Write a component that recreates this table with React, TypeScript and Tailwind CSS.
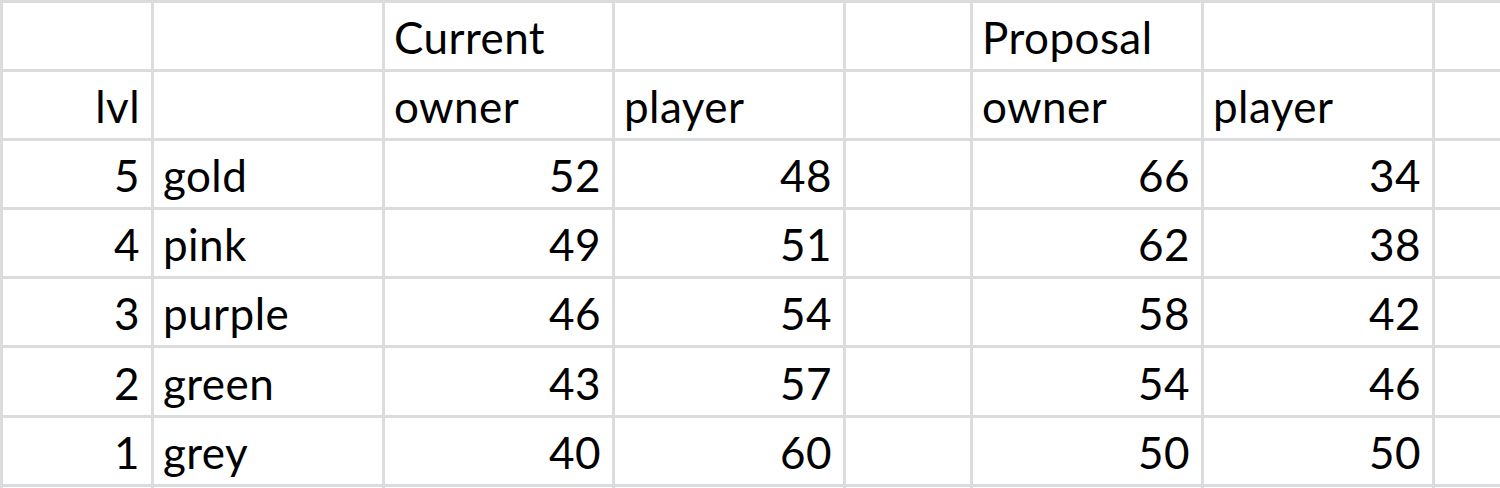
import { Fragment } from "react";

const rows: { lvl: string; name: string; cur: [string, string]; prop: [string, string] }[] = [
  { lvl: "5", name: "gold", cur: ["52", "48"], prop: ["66", "34"] },
  { lvl: "4", name: "pink", cur: ["49", "51"], prop: ["62", "38"] },
  { lvl: "3", name: "purple", cur: ["46", "54"], prop: ["58", "42"] },
  { lvl: "2", name: "green", cur: ["43", "57"], prop: ["54", "46"] },
  { lvl: "1", name: "grey", cur: ["40", "60"], prop: ["50", "50"] },
];

function Cell({ children, right }: { children?: React.ReactNode; right?: boolean }) {
  return (
    <div
      className={
        "bg-white flex items-end overflow-hidden whitespace-nowrap leading-none pb-[10px] " +
        (right ? "justify-end pr-[11px]" : "justify-start pl-[9px]")
      }
    >
      {children}
    </div>
  );
}

export default function App() {
  return (
    <div
      className="h-[488px] w-[1500px] overflow-hidden bg-[#dadcdd] pt-[3px] pl-[3px] text-[44px] tracking-[0.01em] text-black"
      style={{ fontFamily: "Lato, 'Open Sans', sans-serif" }}
    >
      <div className="grid grid-cols-[148px_228px_227px_228px_124px_228px_228px_1fr] grid-rows-[66px_66px_66px_66px_66px_67px_66px_66px] gap-[3px]">
        {/* header row 1 */}
        <Cell />
        <Cell />
        <Cell>Current</Cell>
        <Cell />
        <Cell />
        <Cell>Proposal</Cell>
        <Cell />
        <Cell />

        {/* header row 2 */}
        <Cell right>lvl</Cell>
        <Cell />
        <Cell>owner</Cell>
        <Cell>player</Cell>
        <Cell />
        <Cell>owner</Cell>
        <Cell>player</Cell>
        <Cell />

        {rows.map((r) => (
          <Fragment key={r.lvl}>
            <Cell right>{r.lvl}</Cell>
            <Cell>{r.name}</Cell>
            <Cell right>{r.cur[0]}</Cell>
            <Cell right>{r.cur[1]}</Cell>
            <Cell />
            <Cell right>{r.prop[0]}</Cell>
            <Cell right>{r.prop[1]}</Cell>
            <Cell />
          </Fragment>
        ))}

        {/* partial row below */}
        {Array.from({ length: 8 }).map((_, i) => (
          <Cell key={"x" + i} />
        ))}
      </div>
    </div>
  );
}
